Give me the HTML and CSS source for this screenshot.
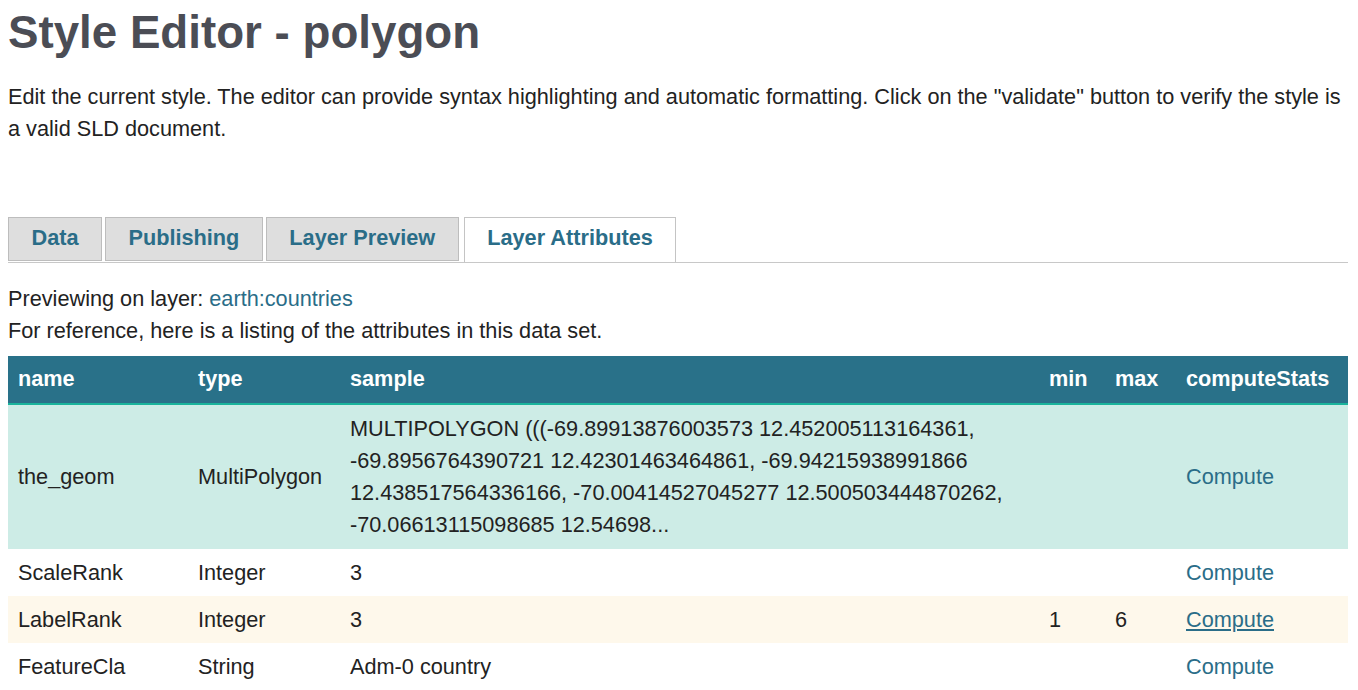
FILE: index.html
```html
<!DOCTYPE html>
<html>
<head>
<meta charset="utf-8">
<title>Style Editor - polygon</title>
<link rel="stylesheet" href="styles.css">
</head>
<body>
<div class="page">
  <h1 class="title">Style Editor - polygon</h1>
  <p class="intro">Edit the current style. The editor can provide syntax highlighting and automatic formatting. Click on the "validate" button to verify the style is a valid SLD document.</p>

  <ul class="tabs">
    <li class="tab"><a href="#">Data</a></li>
    <li class="tab"><a href="#">Publishing</a></li>
    <li class="tab"><a href="#">Layer Preview</a></li>
    <li class="tab active"><a href="#">Layer Attributes</a></li>
  </ul>

  <div class="preview-info">
    <div>Previewing on layer: <a class="link" href="#">earth:countries</a></div>
    <div>For reference, here is a listing of the attributes in this data set.</div>
  </div>

  <table class="attrs">
    <colgroup>
      <col class="c-name"><col class="c-type"><col class="c-sample"><col class="c-min"><col class="c-max"><col class="c-stats">
    </colgroup>
    <thead>
      <tr><th>name</th><th>type</th><th>sample</th><th>min</th><th>max</th><th>computeStats</th></tr>
    </thead>
    <tbody>
      <tr class="row-sel">
        <td>the_geom</td><td>MultiPolygon</td>
        <td>MULTIPOLYGON (((-69.89913876003573 12.452005113164361, -69.8956764390721 12.42301463464861, -69.94215938991866 12.438517564336166, -70.00414527045277 12.500503444870262, -70.06613115098685 12.54698...</td>
        <td></td><td></td><td><a class="link" href="#">Compute</a></td>
      </tr>
      <tr>
        <td>ScaleRank</td><td>Integer</td><td>3</td><td></td><td></td><td><a class="link" href="#">Compute</a></td>
      </tr>
      <tr class="row-hover">
        <td>LabelRank</td><td>Integer</td><td>3</td><td>1</td><td>6</td><td><a class="link link-hover" href="#">Compute</a></td>
      </tr>
      <tr>
        <td>FeatureCla</td><td>String</td><td>Adm-0 country</td><td></td><td></td><td><a class="link" href="#">Compute</a></td>
      </tr>
    </tbody>
  </table>
</div>
</body>
</html>
```
FILE: styles.css
```css
html, body {
  margin: 0;
  padding: 0;
  background: #ffffff;
}
body {
  font-family: "Liberation Sans", Arial, Helvetica, sans-serif;
  font-size: 21.7px;
  line-height: 32px;
  color: #222222;
  overflow: hidden;
}
.page {
  padding: 0 10px 0 8px;
}
.title {
  margin: 7px 0 0;
  font-size: 45.7px;
  line-height: 52px;
  font-weight: bold;
  color: #4b4d55;
}
.intro {
  margin: 22px 0 0;
}
.tabs {
  list-style: none;
  margin: 72px 0 0;
  padding: 0;
  display: flex;
  align-items: flex-end;
  border-bottom: 1px solid #c8c8c8;
}
.tab {
  margin: 0 3px 1px 0;
  background: #dedede;
  border: 1px solid #bdbdbd;
  padding: 7px 22.5px 10px;
  line-height: 25px;
  font-weight: bold;
}
.tab a {
  color: #2a6d88;
  text-decoration: none;
}
.tab.active {
  background: #ffffff;
  border-color: #c4c4c4;
  border-bottom: none;
  margin-bottom: 0;
  padding-bottom: 12px;
  margin-left: 2px;
}
.preview-info {
  margin-top: 20px;
}
.link {
  color: #2a6d88;
  text-decoration: none;
}
.link-hover {
  text-decoration: underline;
}
.attrs {
  margin-top: 9px;
  width: 100%;
  border-collapse: collapse;
  table-layout: fixed;
}
.c-name { width: 180px; }
.c-type { width: 152px; }
.c-sample { width: 699px; }
.c-min { width: 66px; }
.c-max { width: 71px; }
.c-stats { width: 172px; }
.attrs th {
  background: #297189;
  color: #ffffff;
  text-align: left;
  font-weight: bold;
  padding: 7px 10px 8px;
  border-bottom: 2px solid #19b49c;
}
.attrs td {
  padding: 7.5px 10px;
  vertical-align: middle;
  text-align: left;
}
.row-sel td {
  background: #cdece6;
  padding-top: 8px;
  padding-bottom: 8px;
}
.row-hover td {
  background: #fef8eb;
}
```
